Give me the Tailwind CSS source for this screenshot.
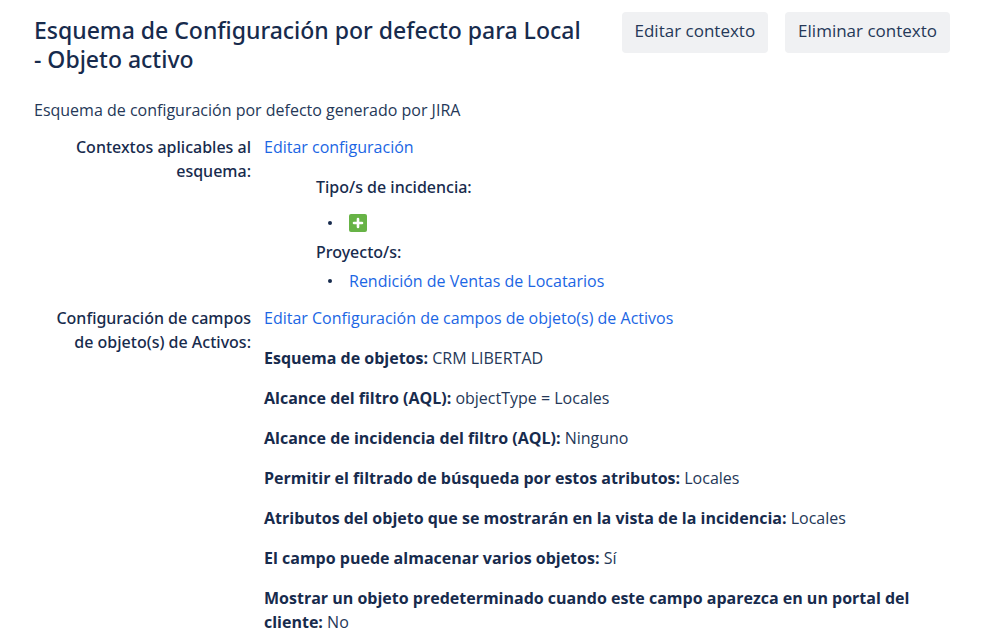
<!DOCTYPE html>
<html lang="es">
<head>
  <meta charset="UTF-8" />
  <meta name="viewport" content="width=device-width, initial-scale=1.0"/>
  <title>Configurar campo personalizado</title>
  <script src="https://cdn.jsdelivr.net/npm/@tailwindcss/browser@4"></script>
</head>
<body class="bg-white text-[#172b4d] text-base leading-6 font-['Open_Sans','Noto_Sans',sans-serif]">

  <main class="pl-[34px] pr-12 pt-3">

    <!-- Header -->
    <header class="flex items-start justify-between gap-8">
      <h1 class="max-w-[552px] pt-1 text-[23px] leading-[29px] font-medium font-['Noto_Sans',sans-serif]">Esquema de Configuración por defecto para Local - Objeto activo</h1>
      <div class="flex shrink-0 gap-[17px] text-[17px] text-[#253858]">
        <button type="button" class="h-[41px] px-[13px] pb-[3px] rounded-[4px] bg-[#f0f1f3]">Editar contexto</button>
        <button type="button" class="h-[41px] px-[13px] pb-[3px] rounded-[4px] bg-[#f0f1f3]">Eliminar contexto</button>
      </div>
    </header>

    <p class="mt-6 text-[#253858]">Esquema de configuración por defecto generado por JIRA</p>

    <dl class="mt-[13px] grid grid-cols-[217px_1fr] gap-[13px]">
      <!-- Contexts -->
      <dt class="text-right font-medium font-['Noto_Sans',sans-serif]">Contextos aplicables al esquema:</dt>
      <dd>
        <a href="#" class="text-[#1b66e4]">Editar configuración</a>
        <div class="mt-4 pl-[52px]">
          <h2 class="font-medium font-['Noto_Sans',sans-serif]">Tipo/s de incidencia:</h2>
          <ul class="mt-3 pl-3">
            <li class="flex h-6 items-center gap-[17px] before:size-1 before:rounded-full before:bg-[#172b4d]">
              <svg class="size-[18px]" viewBox="0 0 18 18" role="img" aria-label="Todos">
                <rect width="18" height="18" rx="2" fill="#67b346"/>
                <path d="M9 5v8M5 9h8" stroke="#fff" stroke-width="2.6" stroke-linecap="round"/>
              </svg>
            </li>
          </ul>
          <h2 class="mt-[5px] font-medium font-['Noto_Sans',sans-serif]">Proyecto/s:</h2>
          <ul class="mt-[5px] pl-3">
            <li class="flex items-center gap-[17px] before:size-1 before:rounded-full before:bg-[#172b4d]">
              <a href="#" class="text-[#1b66e4]">Rendición de Ventas de Locatarios</a>
            </li>
          </ul>
        </div>
      </dd>

      <!-- Asset object fields -->
      <dt class="text-right font-medium font-['Noto_Sans',sans-serif]">Configuración de campos de objeto(s) de Activos:</dt>
      <dd class="flex flex-col gap-4 text-[#253858]">
        <a href="#" class="self-start text-[#1b66e4]">Editar Configuración de campos de objeto(s) de Activos</a>
        <p><b class="text-[#172b4d]">Esquema de objetos:</b> CRM LIBERTAD</p>
        <p><b class="text-[#172b4d]">Alcance del filtro (AQL):</b> objectType = Locales</p>
        <p><b class="text-[#172b4d]">Alcance de incidencia del filtro (AQL):</b> Ninguno</p>
        <p><b class="text-[#172b4d]">Permitir el filtrado de búsqueda por estos atributos:</b> Locales</p>
        <p><b class="text-[#172b4d]">Atributos del objeto que se mostrarán en la vista de la incidencia:</b> Locales</p>
        <p><b class="text-[#172b4d]">El campo puede almacenar varios objetos:</b> Sí</p>
        <p><b class="text-[#172b4d]">Mostrar un objeto predeterminado cuando este campo aparezca en un portal del cliente:</b> No</p>
      </dd>
    </dl>
  </main>
</body>
</html>
